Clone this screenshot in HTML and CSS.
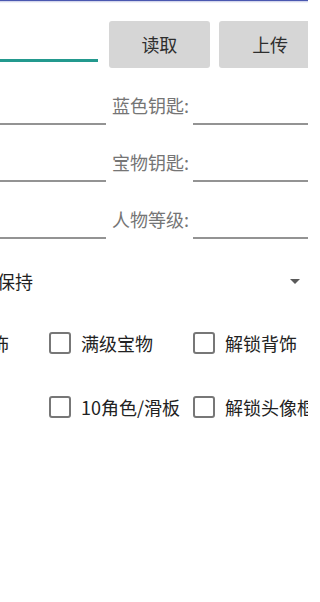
FILE: index.html
```html
<!DOCTYPE html>
<html lang="zh-CN">
<head>
<meta charset="utf-8">
<title>编辑</title>
<link rel="stylesheet" href="styles.css">
</head>
<body>
<div class="appbar-edge"></div>
<main class="page">
  <section class="toprow">
    <div class="field field-active"></div>
    <button class="btn">读取</button>
    <button class="btn">上传</button>
  </section>
  <section class="pair">
    <div class="field field-left"></div>
    <span class="label">蓝色钥匙:</span>
    <div class="field field-right"></div>
  </section>
  <section class="pair">
    <div class="field field-left"></div>
    <span class="label">宝物钥匙:</span>
    <div class="field field-right"></div>
  </section>
  <section class="pair">
    <div class="field field-left"></div>
    <span class="label">人物等级:</span>
    <div class="field field-right"></div>
  </section>
  <section class="spinner">
    <span class="spin-text">保持</span>
    <span class="caret"></span>
  </section>
  <section class="checks">
    <label class="check"><span class="box"></span><span class="check-text">解锁服饰</span></label>
    <label class="check"><span class="box"></span><span class="check-text">满级宝物</span></label>
    <label class="check"><span class="box"></span><span class="check-text">解锁背饰</span></label>
    <div class="check empty"></div>
    <label class="check"><span class="box"></span><span class="check-text">10角色/滑板</span></label>
    <label class="check"><span class="box"></span><span class="check-text">解锁头像框</span></label>
  </section>
</main>
</body>
</html>
```
FILE: styles.css
```css
html, body {
  margin: 0;
  padding: 0;
  background: #ffffff;
}
body {
  width: 308px;
  height: 602px;
  overflow: hidden;
  font-family: "Noto Sans CJK SC", "Noto Sans", sans-serif;
}
.appbar-edge {
  height: 3px;
  background: linear-gradient(#4a58b0 0, #4a58b0 1px, rgba(90,100,180,0.35) 1px, rgba(255,255,255,0) 3px);
}
.page {
  margin-left: -100px;
  width: 430px;
}
.toprow {
  display: flex;
  align-items: flex-start;
  padding-top: 18px;
  height: 47px;
}
.field {
  border-bottom: 2px solid #939393;
}
.field-active {
  width: 198px;
  height: 38px;
  border-bottom: 3px solid #23998e;
  margin-right: 11px;
}
.btn {
  width: 102px;
  height: 47px;
  margin: 0 9px 0 0;
  padding: 0;
  border: none;
  border-radius: 3px;
  background: #d6d6d6;
  color: #2e2e2e;
  font-family: inherit;
  font-size: 18px;
  line-height: 47px;
}
.pair {
  display: flex;
  align-items: flex-end;
  height: 57px;
}
.field-left {
  width: 206px;
}
.label {
  width: 81px;
  padding-left: 6px;
  margin-bottom: 8px;
  font-size: 18px;
  line-height: 24px;
  color: #757575;
  white-space: nowrap;
}
.field-right {
  flex: 1;
}
.spinner {
  display: flex;
  align-items: center;
  justify-content: space-between;
  margin-top: 18px;
  height: 48px;
  padding-left: 97px;
  padding-right: 30px;
}
.spin-text {
  font-size: 18px;
  color: #1f1f1f;
}
.caret {
  width: 0;
  height: 0;
  border-left: 5px solid transparent;
  border-right: 5px solid transparent;
  border-top: 5px solid #5a5a5a;
}
.checks {
  display: grid;
  grid-template-columns: 144px 144px 144px;
  grid-auto-rows: 48px;
  row-gap: 16px;
  margin-top: 14px;
  padding-left: 5px;
}
.check {
  display: flex;
  align-items: center;
  white-space: nowrap;
}
.box {
  box-sizing: border-box;
  width: 22px;
  height: 22px;
  border: 2px solid #777777;
  border-radius: 3px;
  margin-right: 10px;
  flex: none;
}
.check-text {
  font-size: 18px;
  color: #222222;
}
```
